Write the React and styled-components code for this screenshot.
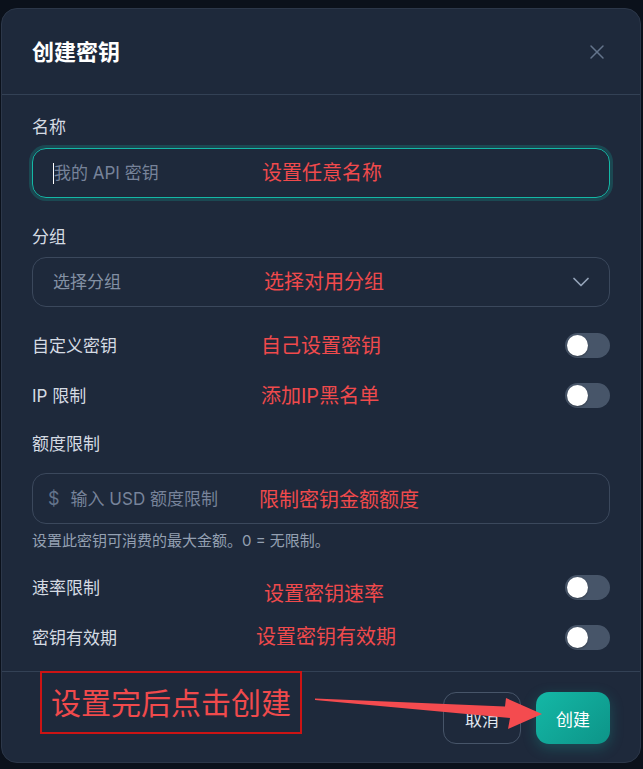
import React from 'react';
import styled, { createGlobalStyle } from 'styled-components';
import { X, ChevronDown } from 'lucide-react';

const GlobalStyle = createGlobalStyle`
  html, body {
    margin: 0;
    padding: 0;
    background: #0b111b;
  }
  body {
    font-family: Inter, "Noto Sans CJK SC", sans-serif;
  }
`;

const App = () => {
  return (
    <>
      <GlobalStyle />
      <Page>
        <Modal>
          <Header>
            <Title>创建密钥</Title>
            <CloseButton>
              <X size={24} strokeWidth={1.5} />
            </CloseButton>
          </Header>

          <Body>
            <Label>名称</Label>
            <Field focused mt={9}>
              <Caret />
              <Placeholder>我的 API 密钥</Placeholder>
              <Note left={229}>设置任意名称</Note>
            </Field>

            <Label mt={27}>分组</Label>
            <Field mt={8}>
              <Placeholder light>选择分组</Placeholder>
              <Note left={231}>选择对用分组</Note>
              <Chevron>
                <ChevronDown size={28} strokeWidth={1.5} />
              </Chevron>
            </Field>

            <ToggleRow mt={26}>
              <Label>自定义密钥</Label>
              <Note left={229}>自己设置密钥</Note>
              <Toggle>
                <Knob />
              </Toggle>
            </ToggleRow>

            <ToggleRow mt={25}>
              <Label>IP 限制</Label>
              <Note left={229}>添加IP黑名单</Note>
              <Toggle>
                <Knob />
              </Toggle>
            </ToggleRow>

            <Label mt={24}>额度限制</Label>
            <Field mt={17} compact>
              <Dollar>$</Dollar>
              <Placeholder>输入 USD 额度限制</Placeholder>
              <Note left={226} dy={1}>限制密钥金额额度</Note>
            </Field>
            <Helper>设置此密钥可消费的最大金额。0 = 无限制。</Helper>

            <ToggleRow mt={24}>
              <Label>速率限制</Label>
              <Note left={232} dy={6}>设置密钥速率</Note>
              <Toggle>
                <Knob />
              </Toggle>
            </ToggleRow>

            <ToggleRow mt={25}>
              <Label>密钥有效期</Label>
              <Note left={224} dy={-1}>设置密钥有效期</Note>
              <Toggle>
                <Knob />
              </Toggle>
            </ToggleRow>
          </Body>

          <Footer>
            <CancelButton>取消</CancelButton>
            <CreateButton>创建</CreateButton>
          </Footer>

          <BigNote>设置完后点击创建</BigNote>
          <Arrow width="240" height="50" viewBox="310 690 240 50">
            <polygon
              points="315,698.5 505,706.5 506,698 542,714 508,729 510,718 315,700"
              fill="#f44b4f"
            />
          </Arrow>
        </Modal>
      </Page>
    </>
  );
};

const Page = styled.div`
  padding: 8px 0 6px 1px;
`;

const Modal = styled.div`
  position: relative;
  width: 640px;
  height: 755px;
  box-sizing: border-box;
  background: #1e293b;
  border: 1px solid #2c3749;
  border-radius: 16px;
  display: flex;
  flex-direction: column;
`;

const Header = styled.div`
  height: 85px;
  padding: 0 30px;
  display: flex;
  align-items: center;
  justify-content: space-between;
  border-bottom: 1px solid #334155;
`;

const Title = styled.div`
  color: #ffffff;
  font-size: 22px;
  font-weight: 700;
  line-height: 28px;
`;

const CloseButton = styled.div`
  width: 26px;
  height: 26px;
  display: flex;
  align-items: center;
  justify-content: center;
  color: #64748b;
`;

const Body = styled.div`
  flex: 1;
  padding: 20px 30px 0;
  display: flex;
  flex-direction: column;
`;

const Label = styled.div`
  margin-top: ${(p) => p.mt || 0}px;
  color: #d5dbe3;
  font-size: 17px;
  line-height: 24px;
`;

const Field = styled.div`
  position: relative;
  margin-top: ${(p) => p.mt || 0}px;
  height: ${(p) => (p.compact ? 51 : 50)}px;
  box-sizing: border-box;
  padding: 0 ${(p) => (p.compact ? 15 : 20)}px;
  display: flex;
  align-items: center;
  border-radius: 14px;
  border: ${(p) => (p.focused ? '1.5px solid #14b8a6' : '1px solid #3b485c')};
  box-shadow: ${(p) => (p.focused ? '0 0 0 3px rgba(20, 184, 166, 0.22)' : 'none')};
`;

const Caret = styled.span`
  width: 1px;
  height: 21px;
  background: #ffffff;
`;

const Placeholder = styled.span`
  color: ${(p) => (p.light ? '#8390a4' : '#77839a')};
  font-size: 17px;
  line-height: 24px;
`;

const Dollar = styled.span`
  color: #64748b;
  font-size: 18px;
  margin-right: 11px;
`;

const Chevron = styled.span`
  margin-left: auto;
  margin-right: -6px;
  display: flex;
  color: #94a3b8;
`;

const Note = styled.span`
  position: absolute;
  left: ${(p) => p.left}px;
  top: 50%;
  transform: translateY(calc(-50% + ${(p) => p.dy || 0}px));
  color: #f04a4c;
  font-size: 20px;
  line-height: 26px;
  white-space: nowrap;
`;

const Helper = styled.div`
  margin-top: 6px;
  color: #94a0b2;
  font-size: 15px;
  line-height: 21px;
`;

const ToggleRow = styled.div`
  position: relative;
  margin-top: ${(p) => p.mt || 0}px;
  height: 25px;
  display: flex;
  align-items: center;
  justify-content: space-between;
`;

const Toggle = styled.div`
  width: 45px;
  height: 25px;
  box-sizing: border-box;
  padding: 2px;
  border-radius: 13px;
  background: #475569;
  display: flex;
  align-items: center;
`;

const Knob = styled.div`
  width: 21px;
  height: 21px;
  border-radius: 50%;
  background: #ffffff;
  box-shadow: 0 1px 2px rgba(0, 0, 0, 0.3);
`;

const Footer = styled.div`
  height: 91px;
  box-sizing: border-box;
  padding: 20px 30px 0;
  display: flex;
  justify-content: flex-end;
  align-items: flex-start;
  gap: 15px;
  border-top: 1px solid #334155;
`;

const BaseButton = styled.div`
  height: 52px;
  box-sizing: border-box;
  padding: 0 20px;
  display: flex;
  align-items: center;
  justify-content: center;
  border-radius: 13px;
  font-size: 17px;
`;

const CancelButton = styled(BaseButton)`
  border: 1px solid #475569;
  color: #e2e8f0;
  padding: 0 21px;
`;

const CreateButton = styled(BaseButton)`
  color: #ffffff;
  background: linear-gradient(135deg, #14b8a6, #0d9488);
  box-shadow: 0 4px 14px rgba(20, 184, 166, 0.28);
`;

const BigNote = styled.div`
  position: absolute;
  left: 38px;
  top: 662px;
  width: 262px;
  height: 63px;
  box-sizing: border-box;
  border: 2px solid #cc1414;
  display: flex;
  align-items: center;
  justify-content: center;
  color: #f04a4c;
  font-size: 30px;
  line-height: 36px;
  white-space: nowrap;
`;

const Arrow = styled.svg`
  position: absolute;
  left: 308px;
  top: 681px;
  z-index: 2;
`;

export default App;
